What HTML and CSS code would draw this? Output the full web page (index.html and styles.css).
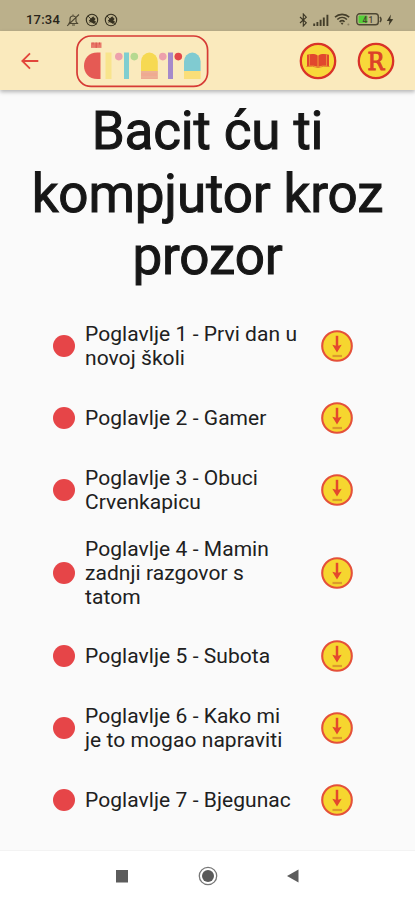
FILE: index.html
```html
<!DOCTYPE html>
<html lang="hr">
<head>
<meta charset="utf-8">
<title>Čitata</title>
<link rel="stylesheet" href="styles.css">
</head>
<body>
<svg width="0" height="0" class="defs">
  <symbol id="dnd" viewBox="0 0 14 14">
    <circle cx="7" cy="7" r="5.7" fill="none" stroke="#35301f" stroke-width="1.1"/>
    <path d="M4.2 7.8 8 3.8l2.2 2.1-1.4 1.3 1.8 1.9-1.6 1.3zM3 3l8.2 8.4M4.5 9.5l2-1.5" fill="#35301f" stroke="#35301f" stroke-width=".9"/>
  </symbol>
  <symbol id="download" viewBox="0 0 32 32">
    <circle cx="16" cy="16" r="14.8" fill="#f6d62f" stroke="#e4503a" stroke-width="2.1"/>
    <path d="M16 5.8V16" stroke="#e4482d" stroke-width="2.5"/>
    <path d="M11.3 14.8 16 16l4.7-1.2L16 22.6z" fill="#e4482d"/>
    <path d="M11.5 26h9.5" stroke="#dc9a2c" stroke-width="2.2"/>
  </symbol>
</svg>
<div class="phone">
  <div class="status">
    <span class="time">17:34</span>
    <svg class="bell" width="14" height="14" viewBox="0 0 14 14"><path d="M3 10.5h8.5L10 8.5V6a3 3 0 0 0-6 0v2.5zM6 12h3M7 1.5V3M1.2 12.8 13 1.5" fill="none" stroke="#4d4631" stroke-width="1.1"/></svg>
    <svg class="mute" width="14" height="14"><use href="#dnd"/></svg>
    <svg class="mute" width="14" height="14"><use href="#dnd"/></svg>
    <span class="spacer"></span>
    <svg width="9" height="14" viewBox="0 0 9 14"><path d="M1 4l6.3 5.8L4.3 13V1l3 3.2L1 10" fill="none" stroke="#3c3725" stroke-width="1.1"/></svg>
    <svg class="signal" width="16" height="12" viewBox="0 0 16 12"><path d="M1.2 9.5V12M4.4 8v4M7.6 5.8V12M10.8 3.4V12M14.4.7V12" stroke="#443e2a" stroke-width="1.9"/></svg>
    <svg class="wifi" width="17" height="13" viewBox="0 0 17 13"><path d="M1 4.2c4-3.8 10.2-3.8 14.2 0M3.3 6.5c2.8-2.6 6.8-2.6 9.6 0M5.6 8.8c1.6-1.5 3.5-1.5 5 0" fill="none" stroke="#443e2a" stroke-width="1.6"/><path d="M6.6 9.8 8.1 12l1.5-2.2z" fill="#443e2a"/><circle cx="14.4" cy="11.4" r="1" fill="#8b8264"/></svg>
    <svg class="battery" width="27" height="13" viewBox="0 0 27 13"><rect x=".8" y=".8" width="21.5" height="11" rx="2.8" fill="none" stroke="#4d4733" stroke-width="1.4"/><path d="M24 4q2 2.5 0 5" fill="none" stroke="#4d4733" stroke-width="1.6"/><rect x="2.5" y="2.5" width="9" height="7.8" rx="1" fill="#54cf38"/><text x="12.4" y="9.5" class="pct">41</text></svg>
    <svg width="8" height="12" viewBox="0 0 8 12"><path d="M4.9.4.8 6.9l2.7.1L2.8 11.6 7.2 5.2 4.3 5z" fill="#3c3725"/></svg>
  </div>
  <header class="bar">
    <svg class="back" width="18" height="18" viewBox="0 0 18 18"><path d="M17.3 9H1.5M9 1.3 1.3 9 9 16.7" fill="none" stroke="#e2463b" stroke-width="1.8"/></svg>
    <svg class="logo" width="133" height="53" viewBox="0 0 133 53">
      <rect x="1" y="1" width="130.6" height="50.4" rx="14" fill="none" stroke="#d63a35" stroke-width="1.7"/>
      <rect x="15" y="7.5" width="10.5" height="5.4" fill="#e8796a"/><path d="M17 7.500v2M20.2 7.500v5.4M23.5 7.500v2" stroke="#d9554c"/>
      <path d="M24.500 17.500v26.500h-3C12.500 44 8 38 8 30.800S12.500 17.500 21.500 17.500z" fill="#e55a54"/>
      <rect x="29.500" y="17.500" width="6" height="26.500" fill="#f8e48c"/>
      <circle cx="42.800" cy="21.600" r="3.800" fill="#eda0ac"/><rect x="48" y="17.500" width="5" height="26.500" fill="#7fced0"/><circle cx="58.300" cy="21.600" r="3.800" fill="#b6d990"/>
      <path d="M65 36V26.500a8.400 9 0 0 1 16.800 0v9.500z" fill="#f6d952"/><rect x="65" y="36" width="16.800" height="8" fill="#efaa91"/><path d="M65 37h16.800M65 42h16.800" stroke="#eab79a"/>
      <circle cx="86.800" cy="21.600" r="3.800" fill="#eda0ac"/><rect x="92" y="17.500" width="5" height="26.500" fill="#a58acb"/><circle cx="102.300" cy="21.600" r="3.800" fill="#e2474a"/>
      <path d="M108 36V26.500a8.300 9 0 0 1 16.600 0v9.500z" fill="#80cbd1"/><rect x="108" y="36" width="16.600" height="8" fill="#fade78"/>
    </svg>
    <span class="spacer"></span>
    <svg class="round" width="38" height="38" viewBox="0 0 38 38"><circle cx="19" cy="19" r="17.200" fill="#f8d83a" stroke="#d93229" stroke-width="2.300"/><path d="M8 12.800c4-1 8-1 10.700.6V25C16 23.600 12 23.600 8 24.300zM30 12.800c-4-1-8-1-10.700.6V25c2.700-1.400 6.700-1.400 10.700-.7z" fill="#e1472e"/><path d="M10.500 12.500v11.300M27.500 12.500v11.300" stroke="#ee9a37" stroke-width=".8"/><path d="M7.500 24.500q6-1 11.500 1.100 5.500-2.100 11.500-1.100" fill="none" stroke="#e06a2d" stroke-width=".8"/></svg>
    <svg class="round second" width="38" height="38" viewBox="0 0 38 38"><circle cx="19" cy="19" r="17.200" fill="#f8d83a" stroke="#d93229" stroke-width="2.300"/><text x="18.800" y="27.700" class="r" textLength="16.800" lengthAdjust="spacingAndGlyphs">R</text></svg>
  </header>
  <main>
    <h1>Bacit ću ti<br>kompjutor kroz<br>prozor</h1>
    <ul>
      <li><i></i><span>Poglavlje 1 - Prvi dan u<br>novoj školi</span><svg><use href="#download"/></svg></li>
      <li><i></i><span>Poglavlje 2 - Gamer</span><svg><use href="#download"/></svg></li>
      <li><i></i><span>Poglavlje 3 - Obuci<br>Crvenkapicu</span><svg><use href="#download"/></svg></li>
      <li class="tall"><i></i><span>Poglavlje 4 - Mamin<br>zadnji razgovor s<br>tatom</span><svg><use href="#download"/></svg></li>
      <li><i></i><span>Poglavlje 5 - Subota</span><svg><use href="#download"/></svg></li>
      <li><i></i><span>Poglavlje 6 - Kako mi<br>je to mogao napraviti</span><svg><use href="#download"/></svg></li>
      <li><i></i><span>Poglavlje 7 - Bjegunac</span><svg><use href="#download"/></svg></li>
    </ul>
  </main>
  <nav>
    <svg width="14" height="14"><rect x="1" y="1" width="12" height="12.500" fill="#5c5c5c"/></svg>
    <svg width="20" height="20"><circle cx="10" cy="10" r="8.700" fill="none" stroke="#777" stroke-width="1.300"/><circle cx="10" cy="10" r="6" fill="#5a5a5a"/></svg>
    <svg width="14" height="16"><path d="M1 8 12.500 1.500v13z" fill="#5c5c5c"/></svg>
  </nav>
</div>
</body>
</html>
```
FILE: styles.css
```css
* { box-sizing: border-box; }
body { margin: 0; font-family: Roboto, "Liberation Sans", sans-serif; background: #fafafa; }
.defs { position: absolute; }
.phone { width: 415px; height: 900px; display: flex; flex-direction: column; overflow: hidden; }
.phone svg { display: block; flex: none; }
.spacer { flex: 1; }
.status { height: 31px; padding: 8px 21px 0 26px; background: #bbb08b; display: flex; align-items: center; flex: none; }
.time { font-size: 13px; line-height: 14px; font-weight: 500; letter-spacing: .2px; color: #28241a; width: 40px; }
.mute { margin-left: 5px; }
.signal { margin-left: 5px; }
.wifi { margin-left: 5px; }
.battery { margin: 0 3px 0 5px; }
.pct { font-size: 8.5px; font-weight: 500; fill: #4a4530; text-anchor: middle; letter-spacing: 1px; }
.bar { height: 59px; flex: none; background: #faeabd; display: flex; align-items: center; padding: 1px 20px 0 21px; box-shadow: 0 2px 4px rgba(0,0,0,.28); }
.logo { margin-left: 37px; }
.second { margin-left: 20px; }
.r { font: 24.5px "DejaVu Serif", serif; fill: #dc4229; stroke: #dc4229; stroke-width: 1.1px; text-anchor: middle; }
main { flex: 1; min-height: 0; padding-top: 10px; }
h1 { margin: 0 0 21.400px; font-size: 53px; line-height: 62.700px; font-weight: 400; letter-spacing: -.15px; -webkit-text-stroke: 1px #161616; text-align: center; color: #161616; }
ul { margin: 0; padding: 0; list-style: none; }
li { height: 72px; display: flex; align-items: center; padding-left: 53px; font-size: 21px; line-height: 24.300px; color: #202020; letter-spacing: .06px; }
li.tall { height: 94px; }
li i { width: 22px; height: 22px; border-radius: 50%; background: #e64548; margin-right: 10px; flex: none; }
li span { width: 236px; white-space: nowrap; padding-top: 1.600px; }
li svg { width: 32px; height: 32px; }
nav { height: 50px; flex: none; background: #fff; border-top: 1px solid #f3f3f3; display: flex; align-items: center; justify-content: space-between; padding: 0 115px 0 115px; }
```
